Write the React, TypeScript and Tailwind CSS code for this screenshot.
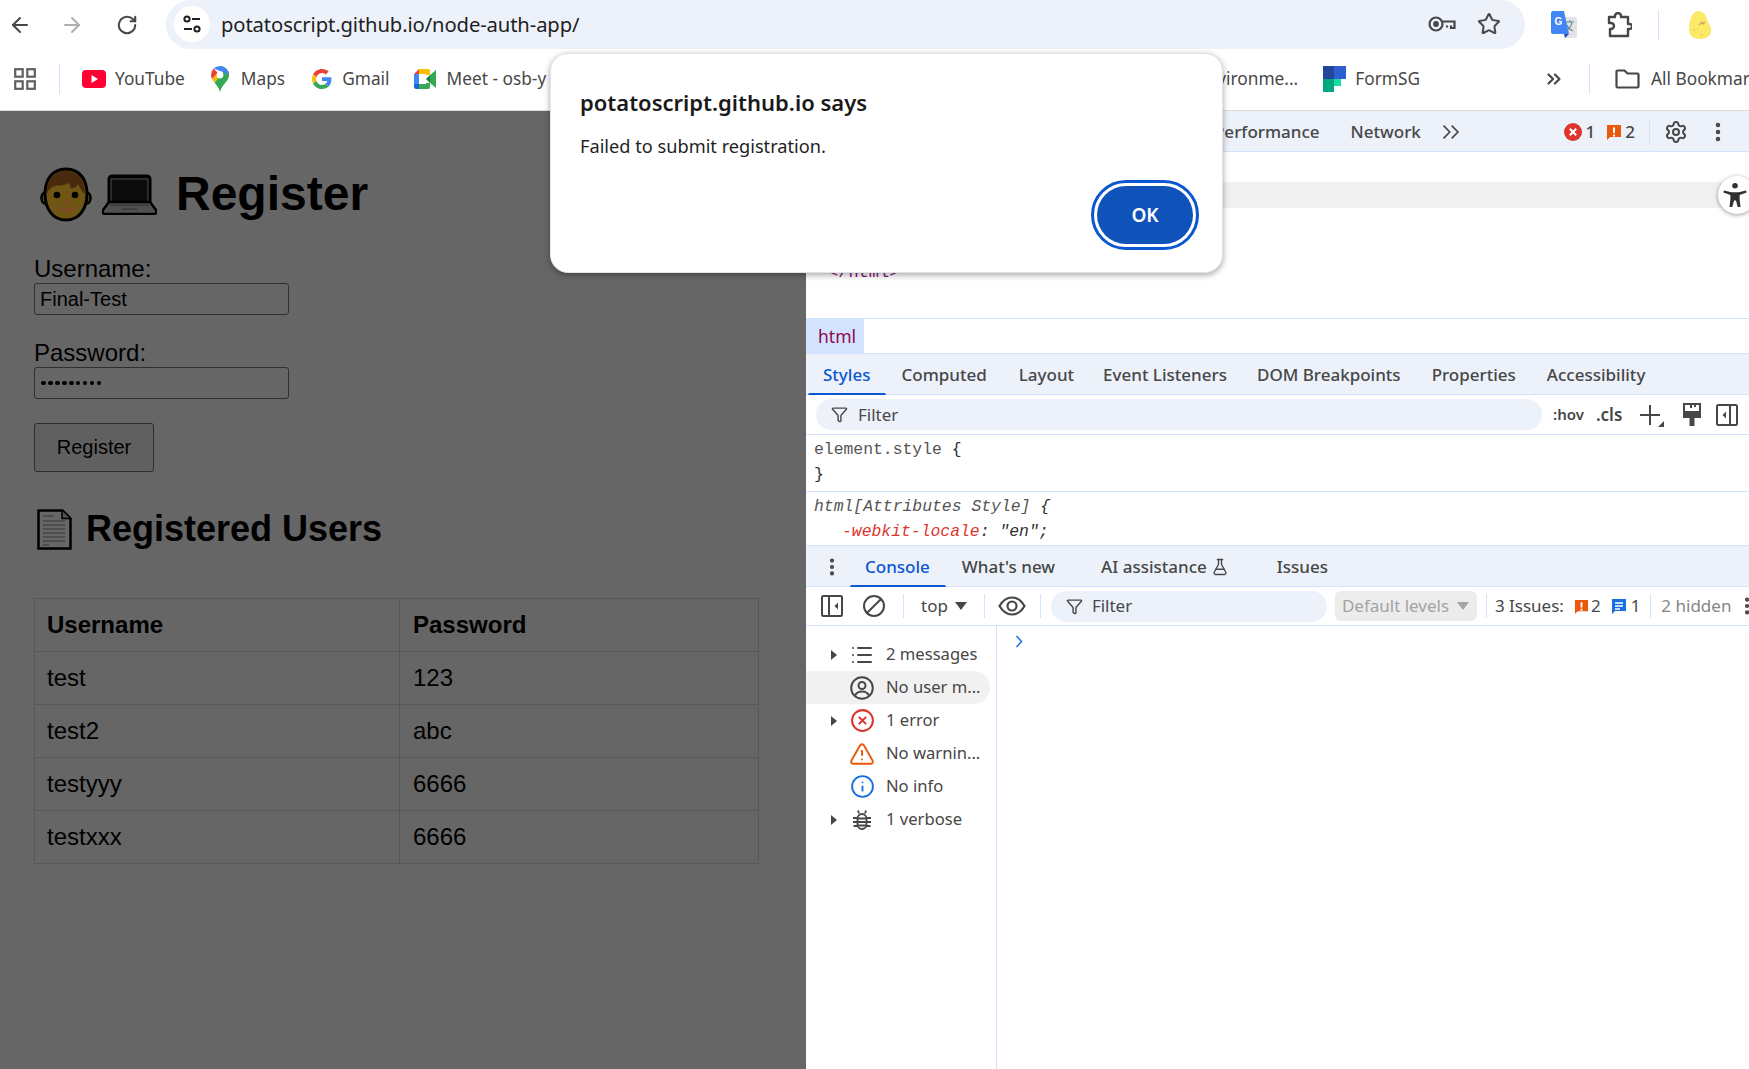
import React from "react";
import { ArrowLeft, ArrowRight, RotateCw, Star, ChevronsRight, EllipsisVertical, Settings, CircleX, TriangleAlert, Info, FlaskConical, List, Funnel, Ban } from "lucide-react";

const Yt = () => (
  <svg width="24" height="18" viewBox="0 0 24 18"><rect width="24" height="18" rx="4" fill="#ff0033" /><path d="M9.5 5v8l6.5-4z" fill="#fff" /></svg>
);
const MapsPin = () => (
  <svg width="18" height="26" viewBox="0 0 18 26">
    <path d="M9 0a9 9 0 0 1 9 9c0 3-1.400 5-3.500 7.500C12 19.500 10 22 9 26c-1-4-3-6.500-5.500-9.500L12 6z" fill="#34a853" />
    <path d="M2.600 2.600A9 9 0 0 1 9 0a9 9 0 0 1 9 9l-6-3-3-1z" fill="#4285f4" />
    <path d="M2.600 2.600A9 9 0 0 0 0 9c0 1.500.4 2.800 1 4l6-6z" fill="#ea4335" />
    <path d="M1 13c.7 1.300 1.500 2.400 2.500 3.500L12 6.500 7 7z" fill="#fbbc04" />
    <circle cx="9" cy="9" r="3.400" fill="#fff" />
  </svg>
);
const G = () => (
  <svg width="20" height="20" viewBox="0 0 48 48">
    <path fill="#ea4335" d="M24 9.500c3.500 0 6.700 1.300 9.100 3.500l6.800-6.800C35.800 2.400 30.300 0 24 0 14.600 0 6.500 5.400 2.600 13.200l7.900 6.100C12.400 13.700 17.700 9.500 24 9.500z" />
    <path fill="#4285f4" d="M46.500 24.500c0-1.600-.1-3.100-.4-4.500H24v9h12.700c-.6 2.900-2.200 5.400-4.700 7.100l7.700 6c4.500-4.200 6.800-10.300 6.800-17.600z" />
    <path fill="#fbbc05" d="M10.500 28.700c-.5-1.400-.8-3-.8-4.700s.3-3.200.8-4.700l-7.900-6.100C.9 16.500 0 20.100 0 24s.9 7.500 2.600 10.800z" />
    <path fill="#34a853" d="M24 48c6.500 0 11.900-2.100 15.900-5.900l-7.700-6c-2.200 1.400-4.900 2.300-8.200 2.300-6.300 0-11.600-4.200-13.500-9.800l-7.900 6.100C6.500 42.600 14.600 48 24 48z" />
  </svg>
);
const MeetI = () => (
  <svg width="22" height="20" viewBox="0 0 22 20">
    <path d="M5 0h9a2 2 0 0 1 2 2v4h-4V5H5z" fill="#fbbc04" />
    <path d="M5 0v5H0z" fill="#ea4335" />
    <path d="M0 5h5v10H0z" fill="#4285f4" />
    <path d="M0 15h5v5H2a2 2 0 0 1-2-2z" fill="#1967d2" />
    <path d="M5 15h7v-1h4v4a2 2 0 0 1-2 2H5z" fill="#34a853" />
    <path d="M12 10l4-4v8z" fill="#188038" />
    <path d="M16 6l6-5v18l-6-5z" fill="#34a853" />
  </svg>
);
const FormSG = () => (
  <svg width="23" height="26" viewBox="0 0 23 26">
    <rect width="11" height="13" fill="#24459c" /><rect x="11" width="12" height="13" fill="#2d5fd0" />
    <rect x="11" y="13" width="7" height="7" fill="#14dea4" /><rect y="13" width="11" height="13" fill="#00a880" />
  </svg>
);
const Key = () => (
  <svg width="28" height="18" viewBox="0 0 28 18" fill="none" stroke="#474747" strokeWidth="2.200">
    <circle cx="8" cy="9" r="6.500" /><circle cx="8" cy="9" r="1.800" fill="#474747" />
    <path d="M14.500 6.500H26.500V13H23V10.500M19 10.500V12.500" />
  </svg>
);
const Translate = () => (
  <svg width="26" height="28" viewBox="0 0 26 28">
    <path d="M9 6h15a2 2 0 0 1 2 2v17a2 2 0 0 1-2 2H14z" fill="#e3e3e3" />
    <path d="M15 11h8M19 9v2M21 11c-1 5-4 8-6 9M16 14c1 3 4 5 6 6" stroke="#6d8a9a" strokeWidth="1.200" fill="none" />
    <path d="M2 0h11l5 23H2a2 2 0 0 1-2-2V2a2 2 0 0 1 2-2z" fill="#4285f4" />
    <path d="M13 23l5 0-4 4z" fill="#1f4fb0" />
    <text x="3.500" y="14" fontSize="10" fontWeight="700" fill="#fff" fontFamily="Liberation Sans">G</text>
  </svg>
);
const Puzzle = () => (
  <svg width="26" height="26" viewBox="0 0 26 26" fill="none" stroke="#474747" strokeWidth="2.400" strokeLinejoin="round">
    <path d="M9 5V4a3 3 0 0 1 6 0v1h7v7h1.500a2.500 2.500 0 0 1 0 5H22v7H4v-7h1a3 3 0 0 0 0-6H3V5z" />
  </svg>
);
const Potato = () => (
  <svg width="24" height="30" viewBox="0 0 24 30">
    <path d="M10 1c6 0 9 5 10 11 2 3 4 7 3 10-1 5-6 7-11 7S1 27 1 19 4 1 10 1z" fill="#fde968" />
    <path d="M11 15l3-3 1 2 2-2" stroke="#c9a060" strokeWidth="1.200" fill="none" />
    <path d="M5 20h2M13 25h2" stroke="#d6c060" strokeWidth="1.200" fill="none" />
  </svg>
);
const Folder = () => (
  <svg width="25" height="20" viewBox="0 0 25 20" fill="none" stroke="#474747" strokeWidth="2.200">
    <path d="M1.500 2.500a1 1 0 0 1 1-1h7l3 3h10a1 1 0 0 1 1 1v12a1 1 0 0 1-1 1h-20a1 1 0 0 1-1-1z" />
  </svg>
);
const Apps = () => (
  <svg width="22" height="22" viewBox="0 0 22 22" fill="none" stroke="#5f5f5f" strokeWidth="2.200">
    <rect x="1.200" y="1.200" width="7.500" height="7.500" /><rect x="13.300" y="1.200" width="7.500" height="7.500" />
    <rect x="1.200" y="13.300" width="7.500" height="7.500" /><rect x="13.300" y="13.300" width="7.500" height="7.500" />
  </svg>
);
const Tune = () => (
  <svg width="20" height="20" viewBox="0 0 20 20" fill="none" stroke="#1f1f1f" strokeWidth="2">
    <circle cx="5" cy="5" r="2.600" /><path d="M10 5h8M2 15h8" /><circle cx="15" cy="15" r="2.600" />
  </svg>
);
const ErrBadge = () => (
  <svg width="18" height="18" viewBox="0 0 18 18"><circle cx="9" cy="9" r="9" fill="#dc362e" /><path d="M5.800 5.800l6.400 6.400M12.200 5.800l-6.400 6.400" stroke="#fff" strokeWidth="2" /></svg>
);
const WarnBadge = ({ s = 16 }: { s?: number }) => (
  <svg width={s} height={s} viewBox="0 0 16 16"><path d="M1 1h14v12H4l-3 3z" fill="#e8590c" /><path d="M8 3.500v5.500M8 10.500v2" stroke="#fff" strokeWidth="2" /></svg>
);
const InfoBadge = () => (
  <svg width="16" height="17" viewBox="0 0 16 17"><path d="M1 1h14v12H4l-3 3z" fill="#1a6fe0" /><path d="M4 5h8M4 8h8M4 11h5" stroke="#fff" strokeWidth="1.400" /></svg>
);
const Gear = () => <Settings size={24} color="#474747" strokeWidth={2} />;
const SidePanel = ({ flip = false }: { flip?: boolean }) => (
  <svg width="22" height="22" viewBox="0 0 22 22" fill="none" stroke="#474747" strokeWidth="2">
    <rect x="1" y="1" width="20" height="20" rx="1.500" />
    <path d={flip ? "M14 1v20" : "M8 1v20"} />
    <path d={flip ? "M10 7.500l-3.500 3.500 3.500 3.500z" : "M17 7.500l-3.500 3.500 3.500 3.500z"} fill="#474747" stroke="none" />
  </svg>
);
const Brush = () => (
  <svg width="18" height="24" viewBox="0 0 18 24" fill="#474747">
    <path d="M1 1h16v13H1z" fill="none" stroke="#474747" strokeWidth="2" /><path d="M1 8h16v6H1zM6.500 14h5v9h-5zM7 1h2v4H7zM11 1h2v3h-2z" />
  </svg>
);
const EyeI = () => (
  <svg width="28" height="20" viewBox="0 0 28 20" fill="none" stroke="#474747" strokeWidth="2.200">
    <path d="M1.500 10C5 4 9 1.500 14 1.500S23 4 26.500 10C23 16 19 18.500 14 18.500S5 16 1.500 10z" /><circle cx="14" cy="10" r="4.500" />
  </svg>
);
const UserCircle = () => (
  <svg width="24" height="24" viewBox="0 0 24 24" fill="none" stroke="#474747" strokeWidth="2">
    <circle cx="12" cy="12" r="10.800" /><circle cx="12" cy="9.500" r="3.500" /><path d="M5 19.500c1.500-3 4-4 7-4s5.500 1 7 4" />
  </svg>
);
const BugI = () => (
  <svg width="20" height="22" viewBox="0 0 20 22" fill="none" stroke="#474747" strokeWidth="1.800">
    <rect x="5.500" y="5" width="9" height="15" rx="4.500" /><path d="M7 4.500L6 1.500M13 4.500l1-3M5.500 9H1M5.500 13H1M5.500 17H1.500M14.500 9H19M14.500 13H19M14.500 17h4M6 9.500h8M6 13h8M6 16.500h8" />
  </svg>
);
const Tri = () => <span className="w-0 h-0 border-y-[5px] border-y-transparent border-l-[6px] border-l-[#474747]" />;

const Boy = () => (
  <svg width="52" height="55" viewBox="0 0 52 55">
    <ellipse cx="5" cy="31" rx="3.500" ry="5.500" fill="#6b5114" stroke="#000" strokeWidth="2.500" />
    <ellipse cx="47" cy="31" rx="3.500" ry="5.500" fill="#6b5114" stroke="#000" strokeWidth="2.500" />
    <path d="M26 2c14 0 21 11 21 25 0 15-8 26-21 26S5 42 5 27C5 13 12 2 26 2z" fill="#6f5614" stroke="#000" strokeWidth="3" />
    <path d="M7 27C6 12 14 4 26 4c13 0 19 9 19 23-3-2-5-6-7-10-1 3-5 5-8 4 1-2 0-4-2-5-4 3-9 2-13 3-4 1-7 4-8 8z" fill="#4a2a0e" />
    <circle cx="17" cy="28" r="3.300" fill="#000" /><circle cx="35" cy="28" r="3.300" fill="#000" />
    <ellipse cx="26" cy="35" rx="3" ry="1.800" fill="#7c4a24" />
    <path d="M18 41c4 4 12 4 16 0-4 1-12 1-16 0z" fill="#7c4a24" stroke="#7c4a24" strokeWidth="2" />
  </svg>
);
const Laptop = () => (
  <svg width="55" height="41" viewBox="0 0 55 41">
    <rect x="7" y="2" width="41" height="31" rx="3" fill="#0b0b0b" stroke="#000" strokeWidth="3" />
    <rect x="9" y="5" width="37" height="25" fill="#0c0c0c" stroke="#4a4a4a" strokeWidth="1" />
    <path d="M7 28h41l6 8c1 2 0 4-2 4H3c-2 0-3-2-2-4z" fill="#505050" stroke="#000" strokeWidth="2.500" strokeLinejoin="round" />
    <path d="M8 31h39M20 35h15" stroke="#3a3a3a" strokeWidth="1.500" />
  </svg>
);
const Page = () => (
  <svg width="35" height="41" viewBox="0 0 35 41">
    <path d="M1.500 1.500h24l8 8v30h-32z" fill="#676767" stroke="#000" strokeWidth="2.500" />
    <path d="M25 1.500v8h8" fill="#4f4f4f" stroke="#000" strokeWidth="1.500" />
    <path d="M6 7h11M6 12h22M6 16h22M6 20h22M6 24h22M6 28h22M6 32h22M6 36h6" stroke="#474747" strokeWidth="1.600" />
  </svg>
);

const Bookmark = ({ icon, label, cls, gap }: { icon: React.ReactNode; label: string; cls: string; gap: string }) => (
  <div className={`flex items-center shrink-0 whitespace-nowrap ${cls}`}>
    {icon}
    <span className={gap}>{label}</span>
  </div>
);

const Sep = ({ cls }: { cls: string }) => <span className={`w-[1px] h-[30px] bg-[#d3e3fd] shrink-0 ${cls}`} />;

const users: [string, string][] = [["test", "123"], ["test2", "abc"], ["testyyy", "6666"], ["testxxx", "6666"]];

const SideRow = ({ tri, icon, label, active }: { tri?: boolean; icon: React.ReactNode; label: string; active?: boolean }) => (
  <div className={`h-[33px] flex items-center w-[184px] rounded-r-full ${active ? "bg-[#f1f1f1]" : ""}`}>
    <span className="w-[31px] flex justify-end shrink-0">{tri && <Tri />}</span>
    <span className="ml-[9px] w-[32px] flex justify-center shrink-0">{icon}</span>
    <span className="ml-[8px] whitespace-nowrap">{label}</span>
  </div>
);

export default function App() {
  return (
    <div className="relative w-[1749px] h-[1069px] overflow-hidden bg-white flex flex-col font-['Noto_Sans','Open_Sans',sans-serif] text-[#474747]">
      {/* address bar */}
      <div className="h-[49px] flex items-center shrink-0 bg-white">
        <ArrowLeft size={24} color="#474747" strokeWidth={2} className="ml-[8px]" />
        <ArrowRight size={24} color="#b0b0b0" strokeWidth={2} className="ml-[28px]" />
        <RotateCw size={22} color="#474747" strokeWidth={2.200} className="ml-[32px]" />
        <div className="ml-[28px] h-[49px] w-[1359px] rounded-r-[27px] rounded-l-[27px] bg-[#ecf1fa] flex items-center -mt-[1px]">
          <span className="ml-[8px] w-[36px] h-[36px] rounded-full bg-white flex items-center justify-center shrink-0"><Tune /></span>
          <span className="ml-[11px] text-[20.200px] text-[#1f1f1f] tracking-[-0.1px] whitespace-nowrap">potatoscript.github.io/node-auth-app/</span>
          <span className="ml-auto flex items-center"><Key /></span>
          <Star size={24} color="#474747" strokeWidth={2} className="ml-[21px] mr-[24px]" />
        </div>
        <span className="ml-[26px]"><Translate /></span>
        <span className="ml-[29px]"><Puzzle /></span>
        <Sep cls="ml-[26px]" />
        <span className="ml-[29px]"><Potato /></span>
      </div>
      {/* bookmarks */}
      <div className="h-[62px] pb-[2px] flex items-center shrink-0 border-b border-[#dcdcdc] bg-white text-[17.300px] text-[#474747]">
        <span className="ml-[14px]"><Apps /></span>
        <Sep cls="ml-[23px]" />
        <Bookmark cls="ml-[22px]" gap="ml-[9px]" icon={<Yt />} label="YouTube" />
        <Bookmark cls="ml-[26px]" gap="ml-[12px]" icon={<MapsPin />} label="Maps" />
        <Bookmark cls="ml-[27px]" gap="ml-[10px]" icon={<G />} label="Gmail" />
        <Bookmark cls="ml-[24px]" gap="ml-[11px]" icon={<MeetI />} label="Meet - osb-y" />
        <span className="ml-auto whitespace-nowrap shrink-0">Environme...</span>
        <Bookmark cls="ml-[25px]" gap="ml-[9px]" icon={<FormSG />} label="FormSG" />
        <ChevronsRight size={22} color="#474747" strokeWidth={2.400} className="ml-[123px] shrink-0" />
        <Sep cls="ml-[24px]" />
        <span className="ml-[25px] shrink-0"><Folder /></span>
        <span className="ml-[11px] w-[98px] overflow-hidden whitespace-nowrap shrink-0">All Bookmarks</span>
      </div>
      {/* main */}
      <div className="flex flex-1 min-h-0">
        {/* page */}
        <div className="w-[806px] shrink-0 bg-[#666666] px-[34px] text-black font-['Liberation_Sans',Arial,sans-serif]">
          <h1 className="mt-[56px] flex items-center h-[54px] text-[48px] leading-[54px] font-bold">
            <span className="ml-[6px]"><Boy /></span>
            <span className="ml-[10px]"><Laptop /></span>
            <span className="ml-[19px]">Register</span>
          </h1>
          <div className="mt-[34px] text-[24px] leading-[28px]">Username:</div>
          <div className="w-[255px] h-[32px] border border-[#303030] rounded-[3px] px-[5px] text-[20px] leading-[30px] text-black">Final-Test</div>
          <div className="mt-[24px] text-[24px] leading-[28px]">Password:</div>
          <div className="w-[255px] h-[32px] border border-[#303030] rounded-[3px] px-[6px] flex items-center gap-[2.150px]">
            {Array.from({ length: 9 }).map((_, i) => (
              <span key={i} className="w-[4.800px] h-[4.800px] rounded-full bg-black" />
            ))}
          </div>
          <button className="mt-[24px] block w-[120px] h-[49px] pb-[2px] border border-[#2e2e2e] rounded-[3px] bg-[#606060] text-[20px] text-black">Register</button>
          <h2 className="mt-[36px] flex items-center h-[42px] text-[36px] leading-[42px] font-bold">
            <span className="ml-[3px]"><Page /></span>
            <span className="ml-[14px]">Registered Users</span>
          </h2>
          <table className="mt-[48px] w-[725px] border-collapse text-[24px] text-left">
            <thead>
              <tr className="h-[53px]">
                <th className="w-[365px] border border-[#585858] px-[12px] font-bold">Username</th>
                <th className="border border-[#585858] pl-[13px] pr-[12px] font-bold">Password</th>
              </tr>
            </thead>
            <tbody>
              {users.map(([u, p]) => (
                <tr key={u} className="h-[53px]">
                  <td className="border border-[#585858] px-[12px]">{u}</td>
                  <td className="border border-[#585858] pl-[13px] pr-[12px]">{p}</td>
                </tr>
              ))}
            </tbody>
          </table>
        </div>
        {/* devtools */}
        <div className="flex-1 min-w-0 flex flex-col bg-white text-[17px]">
          <div className="h-[41px] pt-[1px] shrink-0 bg-[#ecf1fa] border-b border-[#d3e3fd] flex items-center text-[#474747] font-medium text-[17px]">
            <span className="ml-[408px] whitespace-nowrap">Performance</span>
            <span className="ml-[31px]">Network</span>
            <ChevronsRight size={28} color="#474747" strokeWidth={1.500} className="ml-[16px]" />
            <span className="ml-auto flex items-center"><ErrBadge /></span>
            <span className="ml-[4px]">1</span>
            <span className="ml-[11px]"><WarnBadge /></span>
            <span className="ml-[3px]">2</span>
            <Sep cls="ml-[14px] !h-[26px]" />
            <span className="ml-[14px]"><Gear /></span>
            <EllipsisVertical size={24} color="#474747" strokeWidth={2.500} className="ml-[18px] mr-[19px]" />
          </div>
          <div className="h-[167px] shrink-0 border-b border-[#d3e3fd] relative font-['Liberation_Mono',monospace] text-[17px] text-[#881280]">
            <div className="mt-[30px] h-[26px] bg-[#f0f0f0]" />
            <div className="mt-[53px] ml-[22px] leading-[24px]">&lt;/html&gt;</div>
          </div>
          <div className="h-[35px] shrink-0 border-b border-[#d3e3fd] flex">
            <span className="w-[58px] pl-[12px] bg-[#d3e3fd] flex items-center text-[#8b0a50] text-[17.500px]">html</span>
          </div>
          <div className="h-[41px] pt-[2px] shrink-0 bg-[#ecf1fa] border-b border-[#d3e3fd] flex items-center font-medium text-[17px] relative">
            <span className="ml-[17px] text-[#0b57d0]">Styles</span>
            <span className="ml-[31px]">Computed</span>
            <span className="ml-[32px]">Layout</span>
            <span className="ml-[29px]">Event Listeners</span>
            <span className="ml-[30px]">DOM Breakpoints</span>
            <span className="ml-[31px]">Properties</span>
            <span className="ml-[31px]">Accessibility</span>
            <span className="absolute left-[2px] bottom-[-1px] w-[78px] h-[2px] bg-[#0b57d0] rounded-t-[2px]" />
          </div>
          <div className="h-[40px] shrink-0 border-b border-[#d3e3fd] flex items-center">
            <div className="ml-[10px] w-[726px] h-[31px] shrink-0 rounded-full bg-[#ecf1fa] flex items-center">
              <Funnel size={17} color="#474747" strokeWidth={2} className="ml-[15px]" />
              <span className="ml-[10px]">Filter</span>
            </div>
            <span className="ml-[11px] text-[15px] font-semibold">:hov</span>
            <span className="ml-[12px] text-[17px] font-semibold">.cls</span>
            <span className="ml-[18px] relative w-[24px] h-[24px] shrink-0">
              <span className="absolute left-[0px] top-[11px] w-[20px] h-[2px] bg-[#474747]" />
              <span className="absolute left-[9px] top-[2px] w-[2px] h-[20px] bg-[#474747]" />
              <span className="absolute right-[0px] bottom-[0px] w-0 h-0 border-l-[6px] border-l-transparent border-b-[6px] border-b-[#474747]" />
            </span>
            <span className="ml-[19px] shrink-0"><Brush /></span>
            <span className="ml-[15px] shrink-0"><SidePanel flip /></span>
          </div>
          <div className="h-[57px] shrink-0 border-b border-[#d3e3fd] font-['Liberation_Mono',monospace] text-[16.400px] leading-[25px] pl-[8px] pt-[2px] text-[#303030]">
            <div><span className="text-[#555]">element.style</span> {"{"}</div>
            <div>{"}"}</div>
          </div>
          <div className="h-[54px] shrink-0 border-b border-[#d3e3fd] font-['Liberation_Mono',monospace] text-[16.400px] leading-[25px] pl-[8px] pt-[2px] italic text-[#303030]">
            <div><span className="text-[#555]">html[Attributes Style]</span> {"{"}</div>
            <div className="pl-[28px]"><span className="text-[#dc362e]">-webkit-locale</span>: "en";</div>
          </div>
          <div className="h-[41px] pt-[2px] shrink-0 bg-[#ecf1fa] border-b border-[#d3e3fd] flex items-center font-medium text-[17px] relative">
            <EllipsisVertical size={22} color="#474747" strokeWidth={2.600} className="ml-[15px]" />
            <span className="ml-[22px] text-[#0b57d0]">Console</span>
            <span className="ml-[32px] whitespace-nowrap">What's new</span>
            <span className="ml-[46px] whitespace-nowrap">AI assistance</span>
            <FlaskConical size={18} color="#474747" strokeWidth={1.800} className="ml-[4px]" />
            <span className="ml-[48px]">Issues</span>
            <span className="absolute left-[44px] bottom-[-1px] w-[96px] h-[2px] bg-[#0b57d0] rounded-t-[2px]" />
          </div>
          <div className="h-[39px] shrink-0 border-b border-[#d3e3fd] flex items-center overflow-hidden">
            <span className="ml-[15px] shrink-0"><SidePanel /></span>
            <Ban size={24} color="#474747" strokeWidth={2} className="ml-[19px] -scale-x-100 shrink-0" />
            <Sep cls="ml-[17px] !h-[24px]" />
            <span className="ml-[17px]">top</span>
            <span className="ml-[7px] w-0 h-0 border-x-[6px] border-x-transparent border-t-[8px] border-t-[#474747]" />
            <Sep cls="ml-[17px] !h-[24px]" />
            <span className="ml-[13px] shrink-0"><EyeI /></span>
            <Sep cls="ml-[14px] !h-[24px]" />
            <div className="ml-[10px] w-[276px] h-[31px] shrink-0 rounded-full bg-[#ecf1fa] flex items-center">
              <Funnel size={17} color="#474747" strokeWidth={2} className="ml-[15px]" />
              <span className="ml-[9px]">Filter</span>
            </div>
            <div className="ml-[8px] w-[142px] h-[30px] shrink-0 rounded-[6px] bg-[#ececec] text-[#a3a3a3] flex items-center whitespace-nowrap">
              <span className="ml-[7px]">Default levels</span>
              <span className="ml-[8px] w-0 h-0 border-x-[6px] border-x-transparent border-t-[8px] border-t-[#a3a3a3]" />
            </div>
            <Sep cls="ml-[9px] !h-[24px]" />
            <span className="ml-[8px] whitespace-nowrap">3 Issues:</span>
            <span className="ml-[10px] shrink-0"><WarnBadge s={15} /></span>
            <span className="ml-[2px]">2</span>
            <span className="ml-[10px] shrink-0"><InfoBadge /></span>
            <span className="ml-[4px]">1</span>
            <Sep cls="ml-[10px] !h-[24px]" />
            <span className="ml-[10px] whitespace-nowrap text-[#858585]">2 hidden</span>
            <EllipsisVertical size={22} color="#474747" strokeWidth={2.600} className="ml-[5px] shrink-0" />
          </div>
          <div className="flex-1 flex min-h-0">
            <div className="w-[191px] shrink-0 border-r border-[#d3e3fd] pt-[12px] text-[16.600px]">
              <SideRow tri icon={<List size={24} color="#474747" strokeWidth={2} />} label="2 messages" />
              <SideRow active icon={<UserCircle />} label="No user m..." />
              <SideRow tri icon={<CircleX size={25} color="#dc362e" strokeWidth={2} />} label="1 error" />
              <SideRow icon={<TriangleAlert size={26} color="#e8590c" strokeWidth={1.800} />} label="No warnin..." />
              <SideRow icon={<Info size={25} color="#1a6fe0" strokeWidth={1.800} />} label="No info" />
              <SideRow tri icon={<BugI />} label="1 verbose" />
            </div>
            <div className="flex-1 pl-[18px] pt-[9px]">
              <svg width="8" height="13" viewBox="0 0 8 13" fill="none" stroke="#1a6fe0" strokeWidth="1.500"><path d="M1.500 1l5 5.500-5 5.500" /></svg>
            </div>
          </div>
        </div>
      </div>
      {/* accessibility fab */}
      <div className="absolute left-[1718px] top-[176px] w-[38px] h-[38px] rounded-full bg-white shadow-[0_1px_4px_rgba(0,0,0,0.4)] flex items-center">
        <svg width="24" height="26" viewBox="0 0 26 28" className="ml-[5px]" fill="#303030">
          <circle cx="13" cy="4" r="3" /><path d="M1 9l8 2h8l8-2 .6 2.400L18 14v5l1 8h-3l-2-7h-2l-2 7H7l1-8v-5L.4 11.400z" />
        </svg>
      </div>
      {/* alert dialog */}
      <div className="absolute left-[550px] top-[53px] w-[673px] h-[220px] rounded-[18px] bg-white border border-[#e3e3e3] shadow-[0_2px_6px_rgba(0,0,0,0.35)] pl-[29px] text-[#1f1f1f]">
        <div className="mt-[32px] text-[22px] leading-[32px] font-semibold text-[#1a1a1a] whitespace-nowrap">potatoscript.github.io says</div>
        <div className="mt-[14px] text-[18.200px] leading-[28px] whitespace-nowrap">Failed to submit registration.</div>
        <div className="absolute left-[540px] top-[126px] w-[108px] h-[70px] rounded-full border-[3px] border-[#0b57d0] p-[3px]">
          <button className="w-full h-full rounded-full bg-[#0f52ba] text-white text-[19px] font-semibold">OK</button>
        </div>
      </div>
    </div>
  );
}
